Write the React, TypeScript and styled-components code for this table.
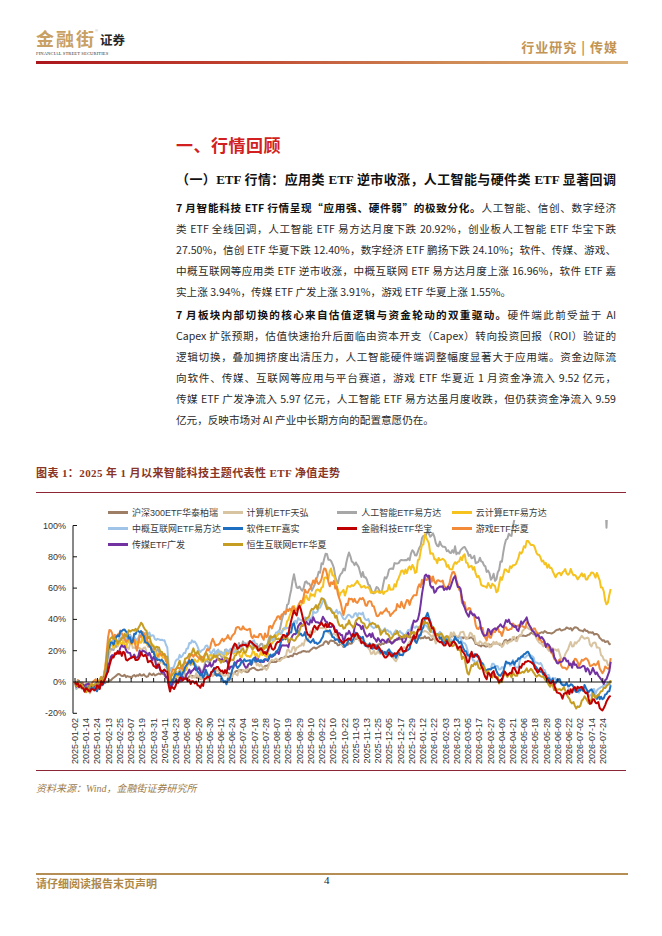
import React from "react";
import styled, { createGlobalStyle } from "styled-components";

const GlobalStyle = createGlobalStyle`
  html, body { margin: 0; padding: 0; background: #fff; }
  body { font-family: "Liberation Sans", "Noto Sans CJK SC", sans-serif; }
  * { box-sizing: border-box; }
`;

const CJK = `"Noto Sans CJK SC", "Liberation Sans", sans-serif`;

const Page = styled.div`
  width: 662px;
  min-height: 936px;
  display: flex;
  flex-direction: column;
  background: #fff;
  color: #1d1d1d;
`;

const Header = styled.header`
  height: 58px;
  padding: 29px 44px 0 36px;
  display: flex;
  justify-content: space-between;
  align-items: flex-end;
`;

const Brand = styled.div`
  display: flex;
  flex-direction: column;
  align-self: flex-start;
`;

const BrandTop = styled.div`
  display: flex;
  align-items: flex-end;
`;

const BrandMark = styled.span`
  font-family: ${CJK};
  font-size: 18px;
  line-height: 18px;
  font-weight: 700;
  color: #c9a064;
  letter-spacing: 2px;
`;

const Reg = styled.span`
  font-size: 4px;
  line-height: 4px;
  color: #aaa;
  align-self: flex-start;
  margin-left: -1px;
`;

const BrandSub = styled.span`
  font-family: ${CJK};
  font-size: 12.5px;
  line-height: 14px;
  font-weight: 700;
  color: #262626;
  margin-left: 2px;
`;

const BrandEn = styled.span`
  font-family: "Liberation Serif", serif;
  font-size: 4.6px;
  line-height: 6px;
  margin-top: 4px;
  color: #333;
  letter-spacing: 0.1px;
`;

const Crumb = styled.span`
  font-family: ${CJK};
  font-size: 13px;
  line-height: 14px;
  font-weight: 700;
  color: #c29454;
  letter-spacing: 1px;
  margin-bottom: 4px;
  white-space: pre;
`;

const GradientRule = styled.div`
  height: 3px;
  margin: 3px 34px 0 36px;
  background: linear-gradient(90deg, #ab161d 0%, #be3d2c 30%, #cf8a55 70%, #dcb27b 100%);
`;

const Article = styled.section`
  padding: 0 46px 0 176px;
`;

const Heading = styled.h1`
  margin: 69px 0 0;
  font-family: ${CJK};
  font-size: 17px;
  line-height: 24px;
  font-weight: 700;
  color: #d21f1f;
  letter-spacing: 0.5px;
`;

const SubHeading = styled.h2`
  margin: 13px 0 0;
  font-family: "Liberation Serif", "Noto Sans CJK SC", serif;
  font-size: 13px;
  line-height: 20px;
  font-weight: 700;
  color: #111;
  text-align: justify;
  text-align-last: justify;
`;

const Para = styled.p<{ $gap: number }>`
  margin: ${(p) => p.$gap}px 0 0;
  font-family: ${CJK};
  font-size: 10.6px;
  line-height: 21px;
  color: #2a2a2a;
`;

const Line = styled.span<{ $last?: boolean }>`
  display: block;
  text-align: justify;
  text-align-last: ${(p) => (p.$last ? "left" : "justify")};
`;

const Strong = styled.b`
  font-weight: 700;
  color: #111;
`;

const ChartSection = styled.section`
  padding: 0 36px 0 36px;
`;

const ChartTitle = styled.div`
  margin-top: 35px;
  font-family: "Liberation Serif", "Noto Sans CJK SC", serif;
  font-size: 11px;
  line-height: 16px;
  font-weight: 700;
  color: #8a3526;
  letter-spacing: 0.4px;
`;

const ChartFrame = styled.div`
  position: relative;
  margin-top: 11px;
  border-top: 1px solid #8c2634;
  border-bottom: 1px solid #8c2634;
  svg { display: block; }
`;

const Legend = styled.div`
  position: absolute;
  left: 72px;
  top: 11px;
  display: grid;
  grid-template-columns: repeat(4, 114.6px);
  grid-auto-rows: 16px;
`;

const LegendItem = styled.div`
  display: flex;
  align-items: center;
  gap: 4px;
  font-family: "Liberation Sans", "Noto Sans CJK SC", sans-serif;
  font-size: 9px;
  color: #3a3a3a;
  white-space: nowrap;
`;

const Swatch = styled.i<{ $color: string }>`
  width: 20px;
  height: 3px;
  background: ${(p) => p.$color};
`;

const Source = styled.div`
  margin-top: 11px;
  font-family: "Liberation Serif", "Noto Sans CJK SC", serif;
  font-style: italic;
  font-size: 10px;
  line-height: 14px;
  color: #9c7c4c;
`;

const Footer = styled.footer`
  margin-top: auto;
  padding: 0 34px 46px 36px;
`;

const FooterRule = styled.div`
  height: 2px;
  background: #b58e55;
`;

const FooterRow = styled.div`
  margin-top: 1px;
  display: grid;
  grid-template-columns: 288px auto 1fr;
  line-height: 14px;
`;

const Disclaimer = styled.span`
  font-family: ${CJK};
  font-size: 11px;
  font-weight: 700;
  color: #b08846;
`;

const PageNo = styled.span`
  font-family: "Liberation Serif", serif;
  font-size: 11px;
  color: #222;
  margin-top: -3px;
`;

/* ---------- chart data ---------- */

type Series = { name: string; color: string; vol: number; beta: number; pts: number[][] };

const SERIES: Series[] = [
  { name: "沪深300ETF华泰柏瑞", color: "#9e7f66", vol: 2, beta: 0.4, pts: [[0,0],[1,-4],[2,-2],[3,2],[4,4],[5,5],[6,4],[7,5],[8.2,4],[8.4,-3],[9,0],[10,2],[11,3],[12,4],[13,5],[14,6],[15,7],[16,8],[17,10],[18,13],[19,17],[20,19],[21,21],[22,23],[22.7,25],[23.9,23],[25.1,27],[26.3,23],[28.6,27],[31,29],[32.8,27],[34,29],[35.2,27],[36.4,23],[38.1,25],[39.3,29],[40.5,31],[41.7,31],[42.9,33],[44.1,35],[45.3,33],[46.5,31],[47,27],[47.7,25]] },
  { name: "计算机ETF天弘", color: "#d9c4a2", vol: 4, beta: 0.8, pts: [[0,0],[1,-4],[2,-2],[2.6,1],[3,20],[4,22],[5,25],[6,22],[7,18],[7.5,14],[8.2,10],[8.4,0],[9,3],[10,5],[11,3],[12,4],[13,3],[14,5],[15,8],[16,10],[17,12],[18,14],[19,20],[20,22],[21,30],[22,35],[22.7,31],[23.9,23],[25.1,27],[26.3,18],[27.5,18],[28.6,16],[29.8,23],[31,31],[32.2,27],[33.4,31],[34.3,29],[35.2,29],[36.4,23],[37.5,25],[38.7,27],[39.9,31],[41.1,29],[42.3,20],[43.5,16],[44.1,25],[45.3,27],[46.5,23],[47,16],[47.7,12]] },
  { name: "人工智能ETF易方达", color: "#a7a7a7", vol: 5, beta: 1, pts: [[0,0],[1,-4],[2,-1],[2.6,2],[3,24],[3.5,22],[4,27],[4.5,26],[5,30],[5.5,25],[6,28],[6.5,26],[7,22],[7.5,18],[8.2,16],[8.4,-3],[9,4],[10,12],[11,11],[12,14],[13,16],[14,19],[15,21],[16,24],[17,24],[18,30],[18.8,42],[19.5,70],[20,58],[20.6,64],[21.2,60],[21.8,72],[22.3,80],[22.7,79],[23.3,62],[23.9,70],[24.5,82],[25,74],[26.7,57],[27.5,64],[28.4,76],[29.8,78],[31,93],[31.6,94],[33.1,84],[34,84],[35.5,80],[36.7,74],[37.5,65],[38.1,80],[39,99],[39.5,112],[41,120],[43,125],[45,118],[46.5,122],[47.25,122],[47.35,95],[47.45,122],[47.7,125]] },
  { name: "云计算ETF易方达", color: "#f6c21d", vol: 5, beta: 1, pts: [[0,0],[1,-5],[2,-2],[2.6,2],[3,26],[3.5,24],[4,25],[4.5,22],[5,28],[5.5,24],[6,27],[6.5,24],[7,20],[7.5,16],[8.2,14],[8.4,-2],[9,4],[10,10],[11,13],[12,15],[13,17],[14,19],[15,16],[16,18],[17,20],[18,27],[19,38],[19.5,50],[20,46],[21,55],[22,60],[22.4,66],[22.7,70],[23.6,55],[24.8,63],[25.7,60],[26.6,54],[27.5,58],[28.6,63],[30.4,74],[31.2,95],[31.6,82],[32.5,78],[33.4,73],[34.6,78],[35.5,73],[36.7,61],[37.5,57],[38.1,69],[39.3,78],[40.5,89],[41.7,75],[42.9,70],[44.1,70],[45.3,66],[46.5,69],[47.0,58],[47.3,50],[47.7,59]] },
  { name: "中概互联网ETF易方达", color: "#9fc4e7", vol: 4, beta: 0.9, pts: [[0,0],[1,-3],[2,-1],[2.6,2],[3,22],[3.5,25],[4,28],[4.5,27],[5,30],[5.5,29],[6,32],[6.5,31],[7,30],[7.5,25],[8.2,22],[8.4,2],[9,10],[10,20],[10.5,26],[11,23],[12,20],[13,18],[14,20],[15,22],[16,25],[17,22],[18,30],[19,35],[20,40],[21,42],[22,50],[22.7,46],[23.9,44],[25.1,42],[26.3,37],[27.5,33],[28.6,31],[29.8,31],[31,37],[31.6,31],[32.8,31],[34,29],[35.2,16],[36.4,10],[37.5,8],[38.7,12],[40.5,14],[41.4,10],[42.3,3],[43.5,-3],[44.7,-5],[45.9,-7],[47,-3],[47.7,-1]] },
  { name: "游戏ETF华夏", color: "#f28a37", vol: 5, beta: 1, pts: [[0,0],[1,-3],[2,-1],[2.6,3],[3,32],[3.5,28],[4,31],[4.5,26],[5,30],[5.5,23],[6,28],[6.5,24],[7,21],[7.5,17],[8.2,14],[8.4,1],[9,7],[10,12],[11,17],[12,22],[13,27],[14,31],[15,35],[16,30],[17,33],[18,39],[19,44],[19.5,47],[20,50],[21,60],[22,68],[22.3,72],[22.7,63],[23.3,61],[23.9,48],[24.5,52],[25.7,50],[27.2,44],[28.6,46],[29.8,50],[30.4,60],[31.3,67],[32.2,65],[33.1,61],[33.7,72],[34.6,48],[35.2,46],[35.8,37],[36.7,31],[37.5,31],[39,37],[40.2,37],[41.1,31],[42.3,18],[43.5,12],[44.7,12],[45.9,14],[46.5,15],[47.0,6],[47.3,8],[47.7,16]] },
  { name: "传媒ETF广发", color: "#7232a2", vol: 4, beta: 1, pts: [[0,0],[1,-5],[2,-2],[2.6,1],[3,14],[3.5,18],[4,17],[4.3,20],[5,15],[5.5,18],[6,17],[6.5,16],[7,14],[7.5,8],[8.2,4],[8.4,-5],[9,0],[10,5],[11,7],[12,10],[13,12],[14,10],[15,12],[16,14],[17,17],[18,20],[19,25],[20,34],[21,40],[21.5,38],[22,42],[22.7,35],[23.9,27],[25.1,35],[26.3,29],[27.5,27],[28.6,25],[29.8,29],[30.6,42],[31.2,74],[31.6,65],[31.9,59],[32.8,61],[33.4,59],[33.8,66],[34.3,57],[34.9,42],[35.8,44],[36.5,29],[37.5,35],[38.7,37],[39.3,35],[40.2,37],[41.1,31],[42,23],[43.2,12],[44.4,12],[45.6,8],[46.5,6],[47.0,0],[47.4,4],[47.7,12]] },
  { name: "软件ETF嘉实", color: "#1e6fc1", vol: 4, beta: 1, pts: [[0,0],[1,-4],[2,-2],[2.6,1],[3,24],[3.5,28],[4,30],[4.5,34],[5,27],[5.5,31],[6,29],[6.5,25],[7,20],[7.5,13],[8.2,10],[8.4,-3],[9,2],[10,9],[10.5,12],[11,8],[12,5],[13,3],[13.5,0],[14,8],[15,12],[16,14],[17,17],[18,21],[19,30],[19.5,38],[20,31],[21,25],[22,27],[22.7,31],[23.9,25],[24.8,29],[25.9,23],[27.2,20],[28.6,16],[29.8,22],[30.7,31],[31.3,44],[31.9,35],[32.8,27],[34,27],[34.9,18],[35.8,18],[36.7,8],[37.8,6],[38.7,12],[40.2,18],[41.1,12],[42.3,1],[43.5,-1],[44.7,-3],[45.9,-5],[46.5,-9],[47.0,-11],[47.4,-6],[47.7,-2]] },
  { name: "恒生互联网ETF华夏", color: "#c59d22", vol: 4, beta: 0.9, pts: [[0,0],[1,-4],[2,-1],[2.6,2],[3,28],[3.5,25],[4,25],[4.5,30],[5,35],[5.5,33],[5.9,39],[6.5,30],[7,26],[7.5,22],[8.2,16],[8.4,0],[9,8],[10,15],[10.5,20],[11,18],[12,15],[13,12],[14,15],[15,18],[16,22],[17,25],[18,28],[19,25],[20,30],[21,45],[22,50],[22.7,46],[23.9,35],[25.1,40],[26.3,35],[27.2,31],[28.6,29],[29.8,27],[31,40],[32.2,31],[33.4,27],[34.3,20],[34.9,8],[35.8,12],[36.7,5],[37.8,0],[38.7,7],[40.5,5],[41.7,3],[42.9,-3],[43.8,-9],[44.7,-18],[45.6,-11],[46.5,-7],[47.0,-5],[47.7,0]] },
  { name: "金融科技ETF华宝", color: "#c00000", vol: 4, beta: 1, pts: [[0,0],[0.7,-6],[1.2,-4],[1.6,-7],[2,-3],[2.6,0],[3,12],[3.5,15],[4,18],[4.5,16],[5,20],[5.5,14],[6,17],[6.5,15],[7,12],[7.5,8],[8.2,5],[8.4,-9],[9,-3],[9.5,2],[10,0],[10.5,-1],[11,-2],[11.5,2],[12,5],[13,8],[13.5,4],[14,20],[15,22],[16,25],[17,20],[18,27],[19,30],[19.5,47],[20,46],[20.5,34],[21,30],[21.8,38],[22.3,35],[22.7,37],[23.9,25],[24.8,31],[25.7,23],[26.9,20],[28.6,16],[29.8,22],[31,40],[31.6,36],[32.5,27],[33.4,25],[34.3,25],[34.9,16],[35.8,18],[36.7,6],[37.5,1],[38.7,7],[40.5,12],[41.7,6],[42.9,-5],[43.5,-9],[44.7,-3],[45.9,-11],[46.5,-13],[47.0,-17],[47.4,-12],[47.7,-8]] },
];

const LEGEND_ORDER = [
  "沪深300ETF华泰柏瑞", "计算机ETF天弘", "人工智能ETF易方达", "云计算ETF易方达",
  "中概互联网ETF易方达", "软件ETF嘉实", "金融科技ETF华宝", "游戏ETF华夏",
  "传媒ETF广发", "恒生互联网ETF华夏",
];

const DATES = [
  "2025-01-02","2025-01-14","2025-01-24","2025-02-13","2025-02-25","2025-03-07","2025-03-19","2025-03-31",
  "2025-04-11","2025-04-23","2025-05-08","2025-05-20","2025-05-30","2025-06-12","2025-06-24","2025-07-04",
  "2025-07-16","2025-07-28","2025-08-07","2025-08-19","2025-08-29","2025-09-10","2025-09-22","2025-10-10",
  "2025-10-22","2025-11-03","2025-11-13","2025-11-25","2025-12-05","2025-12-17","2025-12-29","2026-01-12",
  "2026-01-22","2026-02-03","2026-02-13","2026-03-05","2026-03-17","2026-03-27","2026-04-09","2026-04-21",
  "2026-05-06","2026-05-18","2026-05-28","2026-06-09","2026-06-22","2026-07-02","2026-07-14","2026-07-24",
];

const W = 590;
const H = 277;
const AX = 37;
const X0 = 39;
const DX = 11.23;
const Y0 = 189;
const K = 1.565;
const N = 390;
const T_MAX = 47.7;

const xs = (t: number) => X0 + t * DX;
const yv = (v: number) => Y0 - v * K;

function rng(seed: number) {
  let a = seed >>> 0;
  return () => {
    a = (a + 0x6d2b79f5) >>> 0;
    let t = a;
    t = Math.imul(t ^ (t >>> 15), t | 1);
    t ^= t + Math.imul(t ^ (t >>> 7), t | 61);
    return ((t ^ (t >>> 14)) >>> 0) / 4294967296;
  };
}

function interp(pts: number[][], t: number) {
  for (let j = 1; j < pts.length; j++) {
    if (t <= pts[j][0]) {
      const [t0, v0] = pts[j - 1];
      const [t1, v1] = pts[j];
      return v0 + ((v1 - v0) * (t - t0)) / (t1 - t0);
    }
  }
  return pts[pts.length - 1][1];
}

const market: number[] = (() => {
  const r = rng(7);
  let n = 0;
  return Array.from({ length: N }, () => (n = 0.55 * n + (r() - 0.5) * 3));
})();

const paths = SERIES.map((s, idx) => {
  const r = rng(101 + idx * 17);
  let n = 0;
  const out: string[] = [];
  for (let k = 0; k < N; k++) {
    const t = (k * T_MAX) / (N - 1);
    n = 0.55 * n + (r() - 0.5) * s.vol;
    const v = k === 0 ? 0 : interp(s.pts, t) + n + market[k] * s.beta;
    out.push(`${xs(t).toFixed(1)},${yv(v).toFixed(1)}`);
  }
  return { ...s, d: out.join(" ") };
});

const colorOf = (name: string) => SERIES.find((s) => s.name === name)!.color;

const Chart = () => (
  <ChartFrame>
    <svg width={W} height={H} viewBox={`0 0 ${W} ${H}`}>
      <defs>
        <clipPath id="plot">
          <rect x={AX} y={27} width={W - AX} height={210} />
        </clipPath>
      </defs>
      <g fontFamily="Liberation Sans, sans-serif" fontSize="9" fill="#333">
        {[100, 80, 60, 40, 20, 0, -20].map((v) => (
          <text key={v} x={30} y={yv(v) + 3} textAnchor="end">{v}%</text>
        ))}
      </g>
      <g clipPath="url(#plot)" fill="none" strokeWidth={2} strokeLinejoin="round">
        {paths.map((p) => (
          <polyline key={p.name} points={p.d} stroke={p.color} />
        ))}
      </g>
      <g stroke="#111" strokeWidth={1}>
        <line x1={AX} y1={yv(100)} x2={AX} y2={yv(-20)} />
        {[100, 80, 60, 40, 20, -20].map((v) => (
          <line key={v} x1={AX} y1={yv(v)} x2={AX + 4} y2={yv(v)} />
        ))}
        <line x1={AX} y1={Y0} x2={xs(47.8)} y2={Y0} />
        {DATES.map((d, k) => (
          <line key={d} x1={xs(k)} y1={Y0} x2={xs(k)} y2={Y0 - 4} />
        ))}
      </g>
      <g fontFamily="Liberation Sans, sans-serif" fontSize="9" fill="#333">
        {DATES.map((d, k) => (
          <text key={d} transform={`translate(${xs(k) + 3},225) rotate(-90)`} textAnchor="end">{d}</text>
        ))}
      </g>
    </svg>
    <Legend>
      {LEGEND_ORDER.map((name) => (
        <LegendItem key={name}>
          <Swatch $color={colorOf(name)} />
          {name}
        </LegendItem>
      ))}
    </Legend>
  </ChartFrame>
);

const P1 = [
  <><Strong>7 月智能科技 ETF 行情呈现“应用强、硬件弱”的极致分化。</Strong>人工智能、信创、数字经济</>,
  <>类 ETF 全线回调，人工智能 ETF 易方达月度下跌 20.92%，创业板人工智能 ETF 华宝下跌</>,
  <>27.50%，信创 ETF 华夏下跌 12.40%，数字经济 ETF 鹏扬下跌 24.10%；软件、传媒、游戏、</>,
  <>中概互联网等应用类 ETF 逆市收涨，中概互联网 ETF 易方达月度上涨 16.96%，软件 ETF 嘉</>,
  <>实上涨 3.94%，传媒 ETF 广发上涨 3.91%，游戏 ETF 华夏上涨 1.55%。</>,
];

const P2 = [
  <><Strong>7 月板块内部切换的核心来自估值逻辑与资金轮动的双重驱动。</Strong>硬件端此前受益于 AI</>,
  <>Capex 扩张预期，估值快速抬升后面临由资本开支（Capex）转向投资回报（ROI）验证的</>,
  <>逻辑切换，叠加拥挤度出清压力，人工智能硬件端调整幅度显著大于应用端。资金边际流</>,
  <>向软件、传媒、互联网等应用与平台赛道，游戏 ETF 华夏近 1 月资金净流入 9.52 亿元，</>,
  <>传媒 ETF 广发净流入 5.97 亿元，人工智能 ETF 易方达虽月度收跌，但仍获资金净流入 9.59</>,
  <>亿元，反映市场对 AI 产业中长期方向的配置意愿仍在。</>,
];

const Paragraph = ({ lines, gap }: { lines: React.ReactNode[]; gap: number }) => (
  <Para $gap={gap}>
    {lines.map((l, k) => (
      <Line key={k} $last={k === lines.length - 1}>{l}</Line>
    ))}
  </Para>
);

export default function App() {
  return (
    <Page>
      <GlobalStyle />
      <Header>
        <Brand>
          <BrandTop>
            <BrandMark>金融街</BrandMark>
            <Reg>®</Reg>
            <BrandSub>证券</BrandSub>
          </BrandTop>
          <BrandEn>FINANCIAL STREET SECURITIES</BrandEn>
        </Brand>
        <Crumb>{"行业研究 | 传媒"}</Crumb>
      </Header>
      <GradientRule />

      <Article>
        <Heading>一、行情回顾</Heading>
        <SubHeading>（一）ETF 行情：应用类 ETF 逆市收涨，人工智能与硬件类 ETF 显著回调</SubHeading>
        <Paragraph lines={P1} gap={7} />
        <Paragraph lines={P2} gap={2} />
      </Article>

      <ChartSection>
        <ChartTitle>图表 1：2025 年 1 月以来智能科技主题代表性 ETF 净值走势</ChartTitle>
        <Chart />
        <Source>资料来源：Wind，金融街证券研究所</Source>
      </ChartSection>

      <Footer>
        <FooterRule />
        <FooterRow>
          <Disclaimer>请仔细阅读报告末页声明</Disclaimer>
          <PageNo>4</PageNo>
        </FooterRow>
      </Footer>
    </Page>
  );
}
